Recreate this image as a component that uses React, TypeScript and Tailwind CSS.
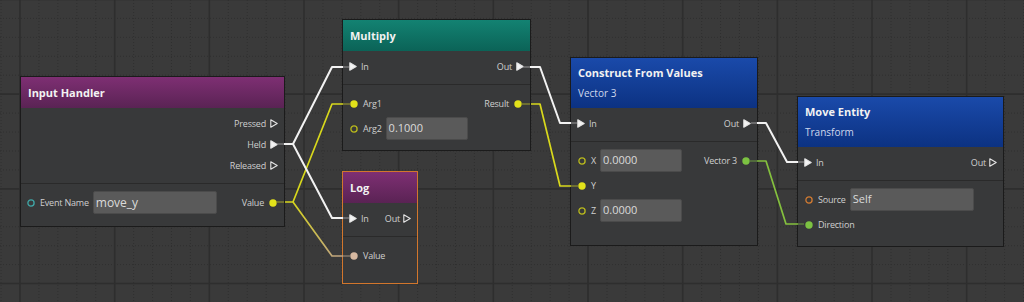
import React from "react";

const P = 94.67;
const M = P / 5;

function Grid() {
  const vs: { x: number; major: boolean }[] = [];
  for (let k = -1; k < 56; k++) {
    vs.push({ x: 20 + k * M, major: k % 5 === 0 });
  }
  const hs: { y: number; major: boolean }[] = [];
  for (let k = 0; k < 18; k++) {
    hs.push({ y: -0.5 + k * M, major: k % 5 === 0 });
  }
  return (
    <svg className="absolute inset-0" width="1024" height="302">
      {vs.filter((v) => !v.major).map((v, i) => (
        <line key={"vm" + i} x1={v.x} y1={0} x2={v.x} y2={302} stroke="#303030" strokeWidth="1" strokeDasharray="1 2" />
      ))}
      {hs.filter((h) => !h.major).map((h, i) => (
        <line key={"hm" + i} x1={0} y1={h.y} x2={1024} y2={h.y} stroke="#303030" strokeWidth="1" strokeDasharray="1 2" />
      ))}
      {vs.filter((v) => v.major).map((v, i) => (
        <line key={"vM" + i} x1={v.x} y1={0} x2={v.x} y2={302} stroke="#2e2e2e" strokeWidth="1.6" />
      ))}
      {hs.filter((h) => h.major).map((h, i) => (
        <line key={"hM" + i} x1={0} y1={h.y} x2={1024} y2={h.y} stroke="#2e2e2e" strokeWidth="1.6" />
      ))}
    </svg>
  );
}

function Tri({ filled }: { filled?: boolean }) {
  return (
    <svg width="8" height="9" viewBox="0 0 8 9" className="block shrink-0">
      <polygon
        points="0.8,0.8 7.2,4.5 0.8,8.2"
        fill={filled ? "#f4f4f4" : "none"}
        stroke="#e6e6e6"
        strokeWidth="1.1"
        strokeLinejoin="round"
      />
    </svg>
  );
}

function Dot({ color, filled }: { color: string; filled?: boolean }) {
  return (
    <svg width="8" height="8" viewBox="0 0 8 8" className="block shrink-0">
      {filled ? (
        <circle cx="4" cy="4" r="3.7" fill={color} />
      ) : (
        <circle cx="4" cy="4" r="3.1" fill="none" stroke={color} strokeWidth="1.3" />
      )}
    </svg>
  );
}

function Label({ children }: { children: React.ReactNode }) {
  return (
    <span className="text-[9px] leading-[12px] tracking-[-0.2px] text-[#cfcfcf] whitespace-nowrap">{children}</span>
  );
}

function Box({ w, children }: { w: string; children: React.ReactNode }) {
  return (
    <div
      className={`${w} ml-[-1px] flex h-[23px] items-center rounded-[2px] border border-[#4b4b4b] bg-[#5a5a5a] pl-[2px] text-[11px] text-[#dadada]`}
    >
      {children}
    </div>
  );
}

function Sep() {
  return <div className="h-px bg-[#2a2a2a]" />;
}

type NodeProps = {
  pos: string;
  header: string;
  headerH: string;
  title: string;
  subtitle?: string;
  border?: string;
  children: React.ReactNode;
};

function Node({ pos, header, headerH, title, subtitle, border, children }: NodeProps) {
  return (
    <div className={`absolute flex flex-col border ${border ?? "border-[#1b1b1b]"} bg-[#38393a] ${pos}`}>
      <div
        className={`${headerH} ${header} flex shrink-0 flex-col pl-[7px] ${subtitle ? "pt-[7px] gap-[4px]" : "justify-center"}`}
      >
        <div className="text-[11px] font-bold leading-[16px] text-[#f2f2f2] whitespace-nowrap">{title}</div>
        {subtitle && <div className="text-[10px] leading-[16px] text-[#cfd8ec]">{subtitle}</div>}
      </div>
      {children}
    </div>
  );
}

const YEL = "#e2e21a";
const GRN = "#7cc242";

function Wires() {
  const white = "#f2f2f2";
  const wy = "#d8d81c";
  return (
    <svg className="pointer-events-none absolute inset-0" width="1024" height="302">
      <defs>
        <linearGradient id="g1" gradientUnits="userSpaceOnUse" x1="293" y1="202" x2="342" y2="256">
          <stop offset="0" stopColor="#d6d41e" />
          <stop offset="1" stopColor="#c0a482" />
        </linearGradient>
      </defs>
      <g strokeWidth="2" fill="none">
        <line x1="277" y1="144" x2="284" y2="144" stroke="#8a8a8a" strokeOpacity="0.6" />
        <line x1="343" y1="67" x2="349" y2="67" stroke="#8a8a8a" strokeOpacity="0.6" />
        <line x1="343" y1="218" x2="349" y2="218" stroke="#8a8a8a" strokeOpacity="0.6" />
        <line x1="276" y1="202" x2="284" y2="202" stroke="#a4a428" strokeOpacity="0.5" />
        <line x1="343" y1="104" x2="350" y2="104" stroke="#a4a428" strokeOpacity="0.5" />
        <line x1="343" y1="256" x2="350" y2="256" stroke="#a89680" strokeOpacity="0.5" />
        <line x1="523" y1="67" x2="530" y2="67" stroke="#8a8a8a" strokeOpacity="0.6" />
        <line x1="522" y1="104" x2="530" y2="104" stroke="#a4a428" strokeOpacity="0.5" />
        <line x1="571" y1="123" x2="577" y2="123" stroke="#8a8a8a" strokeOpacity="0.6" />
        <line x1="571" y1="186" x2="578" y2="186" stroke="#a4a428" strokeOpacity="0.5" />
        <line x1="751" y1="123" x2="757" y2="123" stroke="#8a8a8a" strokeOpacity="0.6" />
        <line x1="750" y1="161" x2="757" y2="161" stroke="#6a9a40" strokeOpacity="0.5" />
        <line x1="798" y1="162" x2="804" y2="162" stroke="#8a8a8a" strokeOpacity="0.6" />
        <line x1="798" y1="224" x2="804" y2="224" stroke="#6a9a40" strokeOpacity="0.5" />
      </g>
      <g fill="none" strokeLinejoin="round">
        <polyline points="285,202 293,202 332,104 343,104" stroke={wy} strokeWidth="1.7" />
        <polyline points="293,202 332,256 343,256" stroke="url(#g1)" strokeWidth="1.7" />
        <polyline points="531,104 540,104 560,186 571,186" stroke={wy} strokeWidth="1.7" />
        <polyline points="757,161 766,161 786,224 798,224" stroke="#84c03e" strokeWidth="1.7" />
        <polyline points="284,144 293,144 332,67 343,67" stroke={white} strokeWidth="2" />
        <polyline points="293,144 332,218 343,218" stroke={white} strokeWidth="2" />
        <polyline points="530,67 540,67 560,123 571,123" stroke={white} strokeWidth="2" />
        <polyline points="757,123 766,123 787,162 798,162" stroke={white} strokeWidth="2" />
      </g>
    </svg>
  );
}

const PURPLE = "bg-[linear-gradient(to_bottom,#7e2f73,#5a2354)]";
const TEAL = "bg-[linear-gradient(to_bottom,#138272,#0b6357)]";
const BLUE = "bg-[linear-gradient(to_bottom,#1a4aaa,#0c3282)]";

export default function App() {
  return (
    <div className="relative h-[302px] w-[1024px] overflow-hidden bg-[#3a3a3a] font-['Open_Sans','Liberation_Sans',sans-serif]">
      <Grid />

      {/* Input Handler */}
      <Node pos="left-[20px] top-[76px] w-[265px] h-[151px]" header={PURPLE} headerH="h-[31px]" title="Input Handler">
        <div className="flex flex-col pt-[5px] pb-[7px] pr-[6px]">
          {["Pressed", "Held", "Released"].map((t) => (
            <div key={t} className="flex h-[21px] items-center justify-end gap-[4px]">
              <Label>{t}</Label>
              <Tri filled={t === "Held"} />
            </div>
          ))}
        </div>
        <Sep />
        <div className="flex flex-col pt-[6px] pl-[6px] pr-[7px]">
          <div className="flex h-[25px] items-center justify-between">
            <div className="flex items-center gap-[5px]">
              <Dot color="#3fa7a7" />
              <Label>Event Name</Label>
              <Box w="w-[124px]">
                <span className="text-[12px]">move_y</span>
              </Box>
            </div>
            <div className="flex items-center gap-[5px]">
              <Label>Value</Label>
              <Dot color={YEL} filled />
            </div>
          </div>
        </div>
      </Node>

      {/* Multiply */}
      <Node pos="left-[342px] top-[19px] w-[189px] h-[132px]" header={TEAL} headerH="h-[31px]" title="Multiply">
        <div className="flex flex-col pt-[5px] pb-[7px] pl-[6px] pr-[6px]">
          <div className="flex h-[21px] items-center justify-between">
            <div className="flex items-center gap-[4px]">
              <Tri filled />
              <Label>In</Label>
            </div>
            <div className="flex items-center gap-[4px]">
              <Label>Out</Label>
              <Tri filled />
            </div>
          </div>
        </div>
        <Sep />
        <div className="flex flex-col pt-[6px] pl-[7px] pr-[8px]">
          <div className="flex h-[25px] items-center justify-between">
            <div className="flex items-center gap-[5px]">
              <Dot color={YEL} filled />
              <Label>Arg1</Label>
            </div>
            <div className="flex items-center gap-[5px]">
              <Label>Result</Label>
              <Dot color={YEL} filled />
            </div>
          </div>
          <div className="flex h-[25px] items-center gap-[5px]">
            <Dot color="#b9b91c" />
            <Label>Arg2</Label>
            <Box w="w-[82px]">0.1000</Box>
          </div>
        </div>
      </Node>

      {/* Log */}
      <Node
        pos="left-[342px] top-[171px] w-[76px] h-[113px]"
        header={PURPLE}
        headerH="h-[31px]"
        title="Log"
        border="border-[#d2762c]"
      >
        <div className="flex flex-col pt-[5px] pb-[7px] pl-[6px] pr-[6px]">
          <div className="flex h-[21px] items-center justify-between">
            <div className="flex items-center gap-[4px]">
              <Tri filled />
              <Label>In</Label>
            </div>
            <div className="flex items-center gap-[3px]">
              <Label>Out</Label>
              <Tri />
            </div>
          </div>
        </div>
        <Sep />
        <div className="flex flex-col pt-[6px] pl-[7px]">
          <div className="flex h-[25px] items-center gap-[5px]">
            <Dot color="#d6b8a0" filled />
            <Label>Value</Label>
          </div>
        </div>
      </Node>

      {/* Construct From Values */}
      <Node
        pos="left-[570px] top-[57px] w-[188px] h-[189px]"
        header={BLUE}
        headerH="h-[50px]"
        title="Construct From Values"
        subtitle="Vector 3"
      >
        <div className="flex flex-col pt-[5px] pb-[7px] pl-[6px] pr-[6px]">
          <div className="flex h-[21px] items-center justify-between">
            <div className="flex items-center gap-[4px]">
              <Tri filled />
              <Label>In</Label>
            </div>
            <div className="flex items-center gap-[4px]">
              <Label>Out</Label>
              <Tri filled />
            </div>
          </div>
        </div>
        <Sep />
        <div className="flex flex-col pt-[6px] pl-[7px] pr-[7px]">
          <div className="flex h-[25px] items-center justify-between">
            <div className="flex items-center gap-[5px]">
              <Dot color="#b9b91c" />
              <Label>X</Label>
              <Box w="w-[82px]">0.0000</Box>
            </div>
            <div className="flex items-center gap-[5px]">
              <Label>Vector 3</Label>
              <Dot color={GRN} filled />
            </div>
          </div>
          <div className="flex h-[25px] items-center gap-[5px]">
            <Dot color={YEL} filled />
            <Label>Y</Label>
          </div>
          <div className="flex h-[25px] items-center gap-[5px]">
            <Dot color="#b9b91c" />
            <Label>Z</Label>
            <Box w="w-[82px]">0.0000</Box>
          </div>
        </div>
      </Node>

      {/* Move Entity */}
      <Node
        pos="left-[797px] top-[96px] w-[207px] h-[151px]"
        header={BLUE}
        headerH="h-[50px]"
        title="Move Entity"
        subtitle="Transform"
      >
        <div className="flex flex-col pt-[5px] pb-[7px] pl-[6px] pr-[6px]">
          <div className="flex h-[21px] items-center justify-between">
            <div className="flex items-center gap-[4px]">
              <Tri filled />
              <Label>In</Label>
            </div>
            <div className="flex items-center gap-[3px]">
              <Label>Out</Label>
              <Tri />
            </div>
          </div>
        </div>
        <Sep />
        <div className="flex flex-col pt-[6px] pl-[7px]">
          <div className="flex h-[25px] items-center gap-[5px]">
            <Dot color="#d07a32" />
            <Label>Source</Label>
            <Box w="w-[124px]">Self</Box>
          </div>
          <div className="flex h-[25px] items-center gap-[5px]">
            <Dot color={GRN} filled />
            <Label>Direction</Label>
          </div>
        </div>
      </Node>

      <Wires />
    </div>
  );
}
